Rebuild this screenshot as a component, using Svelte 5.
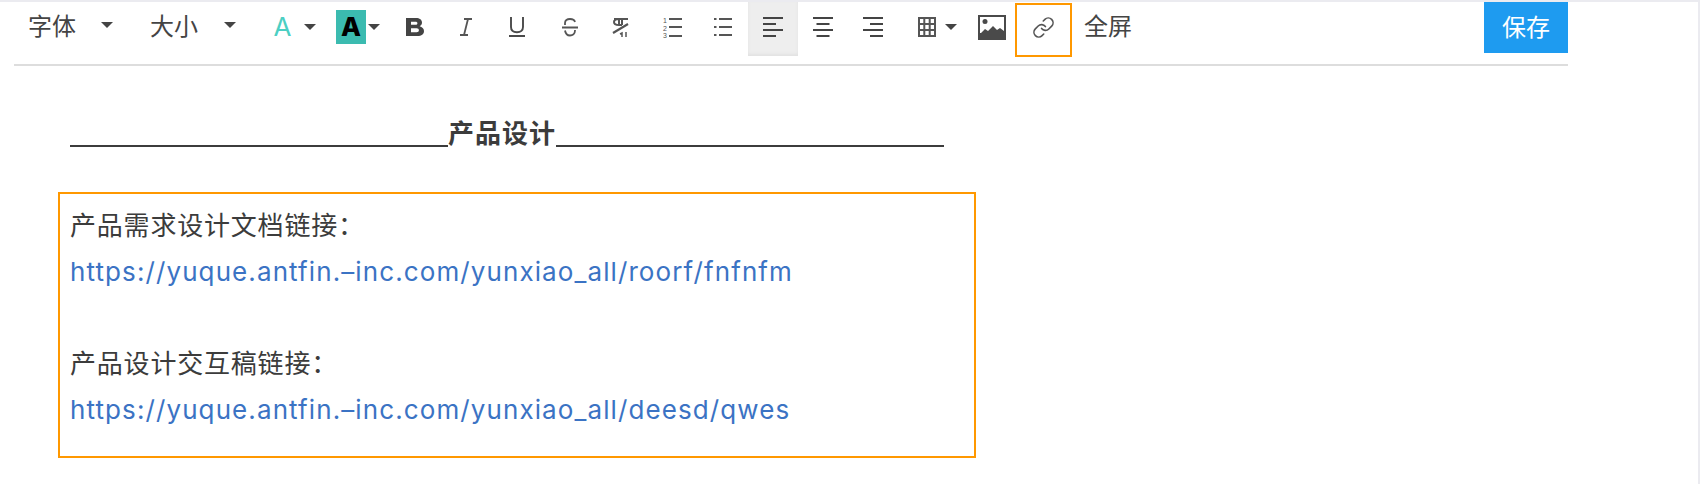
<script>
  const lists = [
    { label: '产品需求设计文档链接：', url: 'https://yuque.antfin.–inc.com/yunxiao_all/roorf/fnfnfm' },
    { label: '产品设计交互稿链接：', url: 'https://yuque.antfin.–inc.com/yunxiao_all/deesd/qwes' }
  ];
</script>

<div class="page">
  <div class="toolbar">
    <div class="tools">
      <span class="pick first">字体<i class="caret"></i></span>
      <span class="pick second">大小<i class="caret"></i></span>
      <span class="tool color"><span class="a-teal">A</span><i class="caret"></i></span>
      <span class="tool bg"><span class="a-bg">A</span><i class="caret"></i></span>
      <span class="tool ic"><svg width="18" height="18" viewBox="0 0 18 18"><path fill="#444" fill-rule="evenodd" d="M0 0h10c3.600 0 6 1.700 6 4.600 0 1.700-.9 3-2.300 3.700C16 8.900 18 10.500 18 13c0 3.200-2.500 5-6.500 5H0zM5 3.700v3.100h4.500c1.200 0 1.900-.6 1.900-1.600s-.7-1.500-1.900-1.500zm0 6.500v4h5.600c1.500 0 2.300-.7 2.300-2s-.8-2-2.300-2z"/></svg></span>
      <span class="tool ic"><svg width="12" height="18" viewBox="0 0 12 18"><path fill="none" stroke="#555" stroke-width="1.800" d="M4 1h8M0 17h8M8 1 4 17"/></svg></span>
      <span class="tool ic"><svg width="16" height="20" viewBox="0 0 16 20"><path fill="none" stroke="#4a4a4a" stroke-width="1.900" d="M2 0v10c0 3.300 2.200 5.200 6 5.200s6-1.900 6-5.200V0M0 19h16"/></svg></span>
      <span class="tool ic strike"><svg width="16" height="19" viewBox="0 0 16 19"><path fill="none" stroke="#555" stroke-width="1.800" d="M0 9.500h16M3 7V5c0-2.500 2-4 5-4 2.500 0 4.500 1 5 3M3 12.500c.5 3 2.500 5 5 5s5-1.700 5-5V12"/></svg></span>
      <span class="tool ic"><svg width="17" height="20" viewBox="0 0 17 20"><path fill="none" stroke="#555" stroke-width="2" d="M2 2h14M10 2v6M7 2C4 2 2 3 2 5s2 3 5 3h3M7 2v6"/><path fill="none" stroke="#555" stroke-width="2.200" d="M16 7 1 16"/><path fill="none" stroke="#555" stroke-width="1.500" d="M8 17l2-1v4M14 15v5"/></svg></span>
      <span class="tool ic"><svg width="20" height="22" viewBox="0 0 20 22"><path stroke="#555" stroke-width="2" d="M7 3h13M7 11h13M7 20h13"/><text x="1" y="7" class="num">1</text><text x="1" y="14.500" class="num">2</text><text x="1" y="22" class="num">3</text></svg></span>
      <span class="tool ic"><svg width="18" height="20" viewBox="0 0 18 20"><path stroke="#555" stroke-width="2" d="M5 2h13M5 10h13M5 18h13M0 2h2.500M0 10h2.500M0 18h2.500"/></svg></span>
      <span class="tool ic active"><svg width="20" height="20" viewBox="0 0 20 20"><path stroke="#444" stroke-width="2" d="M0 1h20M0 7h13M0 13h20M0 19h13"/></svg></span>
      <span class="tool ic after"><svg width="20" height="20" viewBox="0 0 20 20"><path stroke="#444" stroke-width="2" d="M0 1h20M3.500 7h13M0 13h20M3.500 19h13"/></svg></span>
      <span class="tool ic after"><svg width="20" height="20" viewBox="0 0 20 20"><path stroke="#444" stroke-width="2" d="M0 1h20M7 7h13M0 13h20M7 19h13"/></svg></span>
      <span class="tool table"><svg width="18" height="20" viewBox="0 0 18 20"><path fill="none" stroke="#555" stroke-width="2" d="M1 1h16v18H1zM6.300 1v18M11.700 1v18M1 7h16M1 13h16"/></svg><i class="caret"></i></span>
      <span class="tool image"><svg width="28" height="25" viewBox="0 0 28 25"><rect width="28" height="25" fill="#4a4a4a"/><rect x="2" y="2" width="24" height="16" fill="#fff"/><circle cx="7" cy="6.500" r="2.500" fill="#4a4a4a"/><path fill="#4a4a4a" d="M2 19l5-5 3 2 5-5 4 4 3-2 4 3v6H2z"/></svg></span>
      <span class="tool link"><svg width="23" height="23" viewBox="0 0 24 24"><path fill="none" stroke="#555" stroke-width="1.700" stroke-linecap="round" stroke-linejoin="round" d="M10 13a5 5 0 0 0 7.540.54l3-3a5 5 0 0 0-7.070-7.070l-1.720 1.710M14 11a5 5 0 0 0-7.540-.54l-3 3a5 5 0 0 0 7.070 7.070l1.710-1.710"/></svg></span>
      <span class="pick full">全屏</span>
    </div>
    <button class="save">保存</button>
  </div>

  <div class="title"><span class="rule left"></span><b>产品设计</b><span class="rule"></span></div>

  <div class="box">
    {#each lists as item, i}
      <p class="label" class:spaced={i > 0}>{item.label}</p>
      <p class="url">{item.url}</p>
    {/each}
  </div>
</div>

<style>
  :global(body) { margin: 0; background: #fff; }
  .page {
    width: 1700px;
    height: 484px;
    box-sizing: border-box;
    border-top: 2px solid #ebebf0;
    border-right: 2px solid #ebebf0;
    padding-left: 14px;
    overflow: hidden;
    font-family: "Noto Sans CJK SC", sans-serif;
    color: #444;
  }
  .toolbar {
    width: 1554px;
    height: 64px;
    box-sizing: border-box;
    border-bottom: 2px solid #ddd;
    display: flex;
    justify-content: space-between;
    align-items: flex-start;
  }
  .tools { display: flex; align-items: flex-start; height: 56px; }
  .pick {
    font-size: 24px;
    display: flex;
    align-items: center;
    height: 44px;
    color: #444;
    flex: none;
  }
  .first { margin-left: 14px; width: 122px; }
  .second { width: 123px; }
  .full { margin-left: 12px; }
  .caret {
    display: block;
    flex: none;
    width: 0;
    height: 0;
    border: 6px solid transparent;
    border-top-color: #444;
    border-bottom: 0;
  }
  .first .caret { margin: 2px 0 0 25px; }
  .second .caret { margin: 2px 0 0 26px; }
  .tool {
    display: flex;
    flex: none;
    align-items: center;
    height: 50px;
    box-sizing: border-box;
  }
  .color { width: 63px; }
  .a-teal {
    width: 19px;
    text-align: center;
    font: 400 26px/1 "Inter", sans-serif;
    color: #4ccfc3;
  }
  .color .caret { margin-left: 12px; }
  .bg { width: 53px; }
  .bg .caret { margin-left: 2px; }
  .a-bg {
    display: block;
    width: 30px;
    height: 34px;
    background: #3bbbb0;
    color: #000;
    font: 800 26px/34px "Inter", sans-serif;
    text-align: center;
  }
  .ic { width: 51px; justify-content: center; }
  .ic.after { width: 50px; }
  .strike { margin-left: 2px; }
  .active { width: 50px; height: 54px; padding-bottom: 4px; background: #eee; box-shadow: inset 0 -2px 3px #e2e2e2; }
  .table { width: 80px; padding-left: 20px; }
  .table .caret { margin-left: 9px; }
  .image { width: 28px; margin-right: 9px; }
  .link {
    width: 57px;
    height: 54px;
    margin-top: 1px;
    padding-bottom: 5px;
    justify-content: center;
    border: 2px solid #ff9800;
  }
  .num { font: 7px "Liberation Sans", sans-serif; fill: #555; }
  .save {
    width: 84px;
    height: 51px;
    border: 0;
    padding: 0 0 4px;
    background: #1e9bf0;
    color: #fff;
    font: 24px "Noto Sans CJK SC", sans-serif;
  }
  .title {
    width: 874px;
    margin: 49px 0 0 56px;
    display: flex;
    align-items: flex-end;
    font-size: 26px;
    line-height: 34px;
    color: #3c3c3c;
  }
  .rule { flex: 1; border-bottom: 2px solid #3c3c3c; margin-bottom: 2px; }
  .rule.left { flex: 0 0 378px; }
  .title b { letter-spacing: 1px; }
  .box {
    width: 918px;
    height: 266px;
    box-sizing: border-box;
    margin: 43px 0 0 44px;
    border: 2px solid #ff9800;
    padding: 7px 0 0 10px;
  }
  p { margin: 0; line-height: 46px; white-space: nowrap; }
  .label { font-size: 26px; letter-spacing: .8px; color: #3c3c3c; }
  .url { margin-top: 2px; font-family: "Inter", sans-serif; font-size: 26px; letter-spacing: 1.100px; color: #3b73c4; }
  .spaced { margin-top: 44px; }
</style>
